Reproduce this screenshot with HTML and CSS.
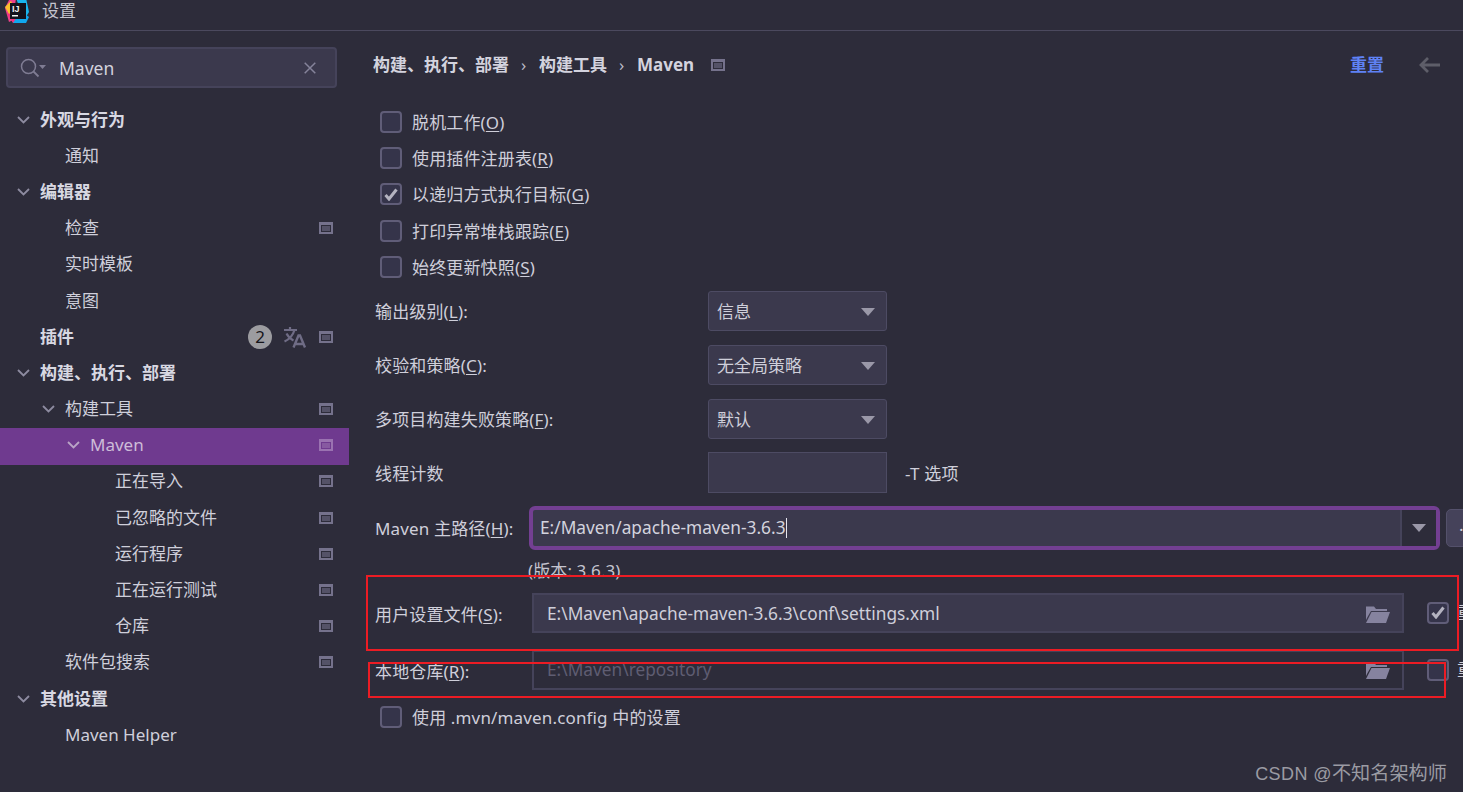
FILE: index.html
```html
<!DOCTYPE html>
<html lang="zh-CN">
<head>
<meta charset="utf-8">
<title>设置</title>
<link rel="stylesheet" href="styles.css">
</head>
<body>
<svg class="defs" width="0" height="0" aria-hidden="true">
  <defs>
    <symbol id="chev" viewBox="0 0 13 8"><path d="M1 1l5.500 5.500L12 1" fill="none" stroke="currentColor" stroke-width="1.800"/></symbol>
    <symbol id="win" viewBox="0 0 14 12"><path d="M0 0h14v12H0zM2 3v7h10V3z" fill="currentColor" fill-rule="evenodd"/><path d="M3 4h8v5H3z" fill="currentColor" opacity=".55"/></symbol>
    <symbol id="folder" viewBox="0 0 24 18"><path d="M0 1.500h8l2 2.500h11v2H5L1.500 12 0 15z" fill="currentColor"/><path d="M5.500 7H24l-4 11H0z" fill="currentColor"/></symbol>
    <symbol id="check" viewBox="0 0 14 13"><path d="M1.500 7l3.500 4L12.500 1.500" fill="none" stroke="currentColor" stroke-width="3"/></symbol>
    <symbol id="caret" viewBox="0 0 14 8"><path d="M0 0h14L7 8z" fill="currentColor"/></symbol>
  </defs>
</svg>
<div class="app">
  <header class="titlebar">
    <svg class="logo" width="25" height="24" viewBox="0 0 25 24">
      <path d="M0 8L5-2h6L8 20 4 22z" fill="#f0408a"/>
      <path d="M2 14l6 9h8l-4-12z" fill="#f5317f"/>
      <path d="M8 23h13l3-6-8-6z" fill="#10a8ee"/>
      <path d="M11-2h10l3 14-5 8z" fill="#18b5ee"/>
      <path d="M0 7l6-6 4 8-6 5z" fill="#fbc02d"/>
      <rect x="5" y="3" width="16" height="16" fill="#14121c"/>
      <rect x="7" y="15" width="6" height="1.500" fill="#f2f2f2"/>
      <text x="7" y="12" class="logo-text">IJ</text>
    </svg>
    <span>设置</span>
  </header>
  <div class="body">
    <aside class="sidebar">
      <div class="search">
        <svg class="search-icon" width="27" height="20" viewBox="0 0 27 20">
          <circle cx="8.500" cy="8.500" r="7" fill="none" stroke="currentColor" stroke-width="1.500"/>
          <path d="M13.500 13.500l5 5" stroke="currentColor" stroke-width="1.800"/>
          <path d="M19 7h7l-3.500 4z" fill="currentColor"/>
        </svg>
        <span class="search-text">Maven</span>
        <svg class="search-clear" width="12" height="12" viewBox="0 0 12 12"><path d="M.7.700l10.600 10.600M11.300.700L.7 11.300" stroke="currentColor" stroke-width="1.500"/></svg>
      </div>
      <nav class="tree">
        <div class="node l0 strong"><svg class="chev"><use href="#chev"/></svg>外观与行为</div>
        <div class="node leaf1">通知</div>
        <div class="node l0 strong"><svg class="chev"><use href="#chev"/></svg>编辑器</div>
        <div class="node leaf1">检查<svg class="win"><use href="#win"/></svg></div>
        <div class="node leaf1">实时模板</div>
        <div class="node leaf1">意图</div>
        <div class="node leaf0 strong">插件
          <span class="badge">2</span>
          <svg class="translate" width="23" height="22" viewBox="0 0 23 22">
            <path d="M1 4h13M7 1v3M11.500 4C10 9 6 13.500 1.500 15.500M3.500 7.500c1.500 3 4 5.500 7 7" fill="none" stroke="currentColor" stroke-width="2.200"/>
            <path d="M10.500 21.500l5-12h1.500l5 12M12 18h9" fill="none" stroke="currentColor" stroke-width="2.400"/>
          </svg>
          <svg class="win win-tight"><use href="#win"/></svg>
        </div>
        <div class="node l0 strong"><svg class="chev"><use href="#chev"/></svg>构建、执行、部署</div>
        <div class="node l1"><svg class="chev"><use href="#chev"/></svg>构建工具<svg class="win"><use href="#win"/></svg></div>
        <div class="node l2 selected"><svg class="chev"><use href="#chev"/></svg>Maven<svg class="win"><use href="#win"/></svg></div>
        <div class="node leaf3">正在导入<svg class="win"><use href="#win"/></svg></div>
        <div class="node leaf3">已忽略的文件<svg class="win"><use href="#win"/></svg></div>
        <div class="node leaf3">运行程序<svg class="win"><use href="#win"/></svg></div>
        <div class="node leaf3">正在运行测试<svg class="win"><use href="#win"/></svg></div>
        <div class="node leaf3">仓库<svg class="win"><use href="#win"/></svg></div>
        <div class="node leaf1">软件包搜索<svg class="win"><use href="#win"/></svg></div>
        <div class="node l0 strong"><svg class="chev"><use href="#chev"/></svg>其他设置</div>
        <div class="node leaf1">Maven Helper</div>
      </nav>
    </aside>
    <main class="panel">
      <div class="crumbs">
        <span>构建、执行、部署</span><i class="sep">›</i><span>构建工具</span><i class="sep">›</i><span>Maven</span>
        <svg class="win crumb-win"><use href="#win"/></svg>
        <a class="reset">重置</a>
        <svg class="back" width="21" height="16" viewBox="0 0 21 16"><path d="M9 1L2 8l7 7M2 8h19" fill="none" stroke="currentColor" stroke-width="2.800"/></svg>
      </div>
      <label class="check-row"><span class="box"></span>脱机工作(<u>O</u>)</label>
      <label class="check-row"><span class="box"></span>使用插件注册表(<u>R</u>)</label>
      <label class="check-row"><span class="box"><svg class="tick"><use href="#check"/></svg></span>以递归方式执行目标(<u>G</u>)</label>
      <label class="check-row"><span class="box"></span>打印异常堆栈跟踪(<u>E</u>)</label>
      <label class="check-row"><span class="box"></span>始终更新快照(<u>S</u>)</label>
      <div class="select-row"><span class="select-label">输出级别(<u>L</u>):</span><div class="select">信息<svg class="caret"><use href="#caret"/></svg></div></div>
      <div class="select-row"><span class="select-label">校验和策略(<u>C</u>):</span><div class="select">无全局策略<svg class="caret"><use href="#caret"/></svg></div></div>
      <div class="select-row"><span class="select-label">多项目构建失败策略(<u>F</u>):</span><div class="select">默认<svg class="caret"><use href="#caret"/></svg></div></div>
      <div class="select-row"><span class="select-label">线程计数</span><div class="plain-input"></div><span class="t-opt">-T 选项</span></div>
      <div class="path-row home-row">
        <span class="path-label home-label">Maven 主路径(<u>H</u>):</span>
        <div class="home-field">
          <span class="home-value">E:/Maven/apache-maven-3.6.3<b class="cursor"></b></span>
          <span class="home-drop"><svg class="caret"><use href="#caret"/></svg></span>
        </div>
        <span class="more">...</span>
      </div>
      <div class="version">(版本: 3.6.3)</div>
      <div class="path-row settings-row">
        <span class="path-label">用户设置文件(<u>S</u>):</span>
        <div class="path-field">E:\Maven\apache-maven-3.6.3\conf\settings.xml<svg class="folder"><use href="#folder"/></svg></div>
        <span class="box side-box"><svg class="tick"><use href="#check"/></svg></span>
        <span class="override">重写</span>
      </div>
      <div class="path-row repo-row">
        <span class="path-label">本地仓库(<u>R</u>):</span>
        <div class="path-field disabled"><span class="dim">E:\Maven\repository</span><svg class="folder"><use href="#folder"/></svg></div>
        <span class="box side-box"></span>
        <span class="override">重写</span>
      </div>
      <label class="check-row last-check"><span class="box"></span>使用 .mvn/maven.config 中的设置</label>
    </main>
  </div>
  <div class="red-box red-a"></div>
  <div class="red-box red-b"></div>
  <div class="watermark"><span class="wm-latin">CSDN @</span>不知名架构师</div>
</div>
</body>
</html>
```
FILE: styles.css
```css
* { box-sizing: border-box; }
html, body { margin: 0; height: 100%; overflow: hidden; }
body {
  background: #2d2c3a;
  color: #cfcfda;
  font: 17px/24px "Noto Sans", "Noto Sans CJK SC", sans-serif;
}
u { text-underline-offset: 2px; }
.defs { position: absolute; }
.app { position: relative; width: 1463px; height: 792px; overflow: hidden; }

.titlebar {
  height: 31px;
  display: flex;
  align-items: center;
  padding: 0 0 8px 5px;
  border-bottom: 1px solid #4b495e;
  color: #c4c4cf;
}
.logo { flex: none; margin-right: 12px; margin-top: 2px; }
.logo-text { font: 700 9px "Liberation Sans", sans-serif; fill: #f2f2f2; }

.body { display: flex; height: 761px; }
.sidebar { width: 349px; flex: none; padding-top: 16px; }
.search {
  width: 331px;
  height: 41px;
  margin-left: 6px;
  display: flex;
  align-items: center;
  padding: 0 19px 0 12px;
  background: #3b394d;
  border: 2px solid #45435a;
  border-radius: 4px;
  color: #d3d3de;
}
.search-icon { color: #7f7c93; margin-right: 12px; flex: none; }
.search-text { flex: 1; font-size: 17.500px; }
.search-clear { color: #85839a; }

.tree { margin-top: 13.500px; }
.node {
  height: 36.200px;
  display: flex;
  align-items: center;
  white-space: nowrap;
  color: #cfcfda;
}
.strong { font-weight: 700; color: #d8d8e2; }
.l0 { padding-left: 17px; }
.l1 { padding-left: 42px; }
.l2 { padding-left: 67px; }
.leaf0 { padding-left: 40px; }
.leaf1 { padding-left: 65px; }
.leaf3 { padding-left: 115px; }
.chev { width: 13px; height: 8px; margin-right: 10px; color: #8d8ba0; flex: none; }
.win { width: 14px; height: 12px; margin-left: auto; margin-right: 16px; color: #75728c; flex: none; }
.selected {
  height: 36.900px;
  margin-top: .7px;
  margin-bottom: -1.400px;
  padding-bottom: 2px;
  background: #6f3a8f;
  color: #cdbcd8;
}
.selected .chev { color: #b9a4c6; }
.selected .win { color: #9a72b1; }
.badge {
  width: 24px;
  height: 24px;
  margin-left: auto;
  margin-right: -1px;
  border-radius: 50%;
  background: #9c9ca0;
  color: #15151a;
  font-weight: 400;
  font-size: 17px;
  line-height: 24px;
  text-align: center;
}
.translate { margin-left: 12px; color: #6f6c85; flex: none; }
.win-tight { margin-left: 13px; }

.panel { flex: 1; min-width: 0; padding-left: 26px; }
.crumbs {
  height: 68px;
  margin-bottom: 5px;
  margin-left: -2px;
  display: flex;
  align-items: center;
  font-weight: 700;
  color: #d3d3de;
  white-space: nowrap;
}
.sep { font-style: normal; font-weight: 400; margin: 0 9px 0 12px; width: 9px; color: #b9b9c6; }
.crumb-win { margin: 0 0 0 17px; }
.reset { margin-left: auto; color: #5f82f5; font-weight: 700; }
.back { margin-left: 35px; margin-right: 23px; color: #5e5e69; }

.check-row {
  height: 36.200px;
  display: flex;
  align-items: center;
  padding: 2px 0 0 5px;
  white-space: nowrap;
  letter-spacing: .15px;
}
.box {
  width: 22px;
  height: 22px;
  flex: none;
  border: 2px solid #605d78;
  border-radius: 4px;
  background: #35344a;
  margin: 0 10px 2px 0;
  display: flex;
  align-items: center;
  justify-content: center;
}
.tick { width: 14px; height: 13px; color: #b4b3c0; }

.select-row { height: 54px; display: flex; align-items: center; position: relative; top: -1px; }
.select-label { width: 333px; flex: none; white-space: nowrap; padding-top: 2px; letter-spacing: .15px; }
.select {
  width: 179px;
  height: 40px;
  display: flex;
  align-items: center;
  justify-content: space-between;
  padding: 2px 11px 0 8px;
  background: #3b394d;
  border: 1px solid #4d4b63;
  border-radius: 3px;
}
.caret { width: 14px; height: 8px; color: #9a98a8; flex: none; }
.plain-input { width: 179px; height: 41px; background: #3b394d; border: 1px solid #4d4b63; }
.t-opt { margin-left: 18px; padding-top: 2px; letter-spacing: .2px; }

.path-row { display: flex; align-items: center; white-space: nowrap; }
.path-label { width: 157px; flex: none; padding-top: 4px; letter-spacing: .15px; }
.home-label { width: 154px; padding-top: 2px; }
.home-row { height: 44px; margin-top: 5px; }
.home-field {
  width: 911px;
  height: 44px;
  flex: none;
  display: flex;
  background: #3b394d;
  border: 4px solid #733f92;
  border-radius: 6px;
  padding-left: 7px;
}
.home-value { flex: 1; line-height: 36px; font-size: 17.300px; color: #d3d3de; }
.cursor { display: inline-block; width: 1px; height: 20px; background: #e5e5ee; vertical-align: -4px; }
.home-drop {
  width: 36px;
  flex: none;
  display: flex;
  align-items: center;
  justify-content: center;
  background: #2d2c3a;
  border-left: 2px solid #45435a;
}
.more {
  width: 60px;
  height: 38px;
  margin-left: 6px;
  flex: none;
  padding-left: 12px;
  line-height: 30px;
  background: #45425a;
  border: 1px solid #54516b;
  border-radius: 5px;
}
.version { margin: 9px 0 0 153px; height: 24px; line-height: 24px; letter-spacing: .1px; color: #c4c4cf; }
.settings-row { height: 40px; margin-top: 10px; }
.repo-row { height: 40px; margin-top: 17px; }
.path-field {
  width: 872px;
  height: 40px;
  flex: none;
  display: flex;
  align-items: center;
  justify-content: space-between;
  padding: 1px 12px 0 13px;
  font-size: 17.300px;
  background: #3b394d;
  border: 2px solid #45435a;
}
.settings-row .path-field { padding-top: 3px; }
.path-field.disabled { background: #2d2c3a; }
.dim { color: #5f5d72; }
.folder { width: 24px; height: 18px; color: #86839f; flex: none; }
.box.side-box { margin: 0 0 0 23px; }
.override { margin-left: 8px; }
.last-check { margin-top: 8.500px; }

.red-box { position: absolute; border: 2px solid #ec1c24; pointer-events: none; }
.red-a { left: 366px; top: 575px; width: 1093px; height: 76px; }
.red-b { left: 368px; top: 662px; width: 1078px; height: 36px; }
.watermark {
  position: absolute;
  right: 16px;
  top: 759px;
  font: 19.200px/26px "Noto Sans CJK SC", sans-serif;
  color: #9b9ba3;
  white-space: nowrap;
}
.wm-latin { font: 18px/26px "Liberation Sans", sans-serif; letter-spacing: .4px; }
```
